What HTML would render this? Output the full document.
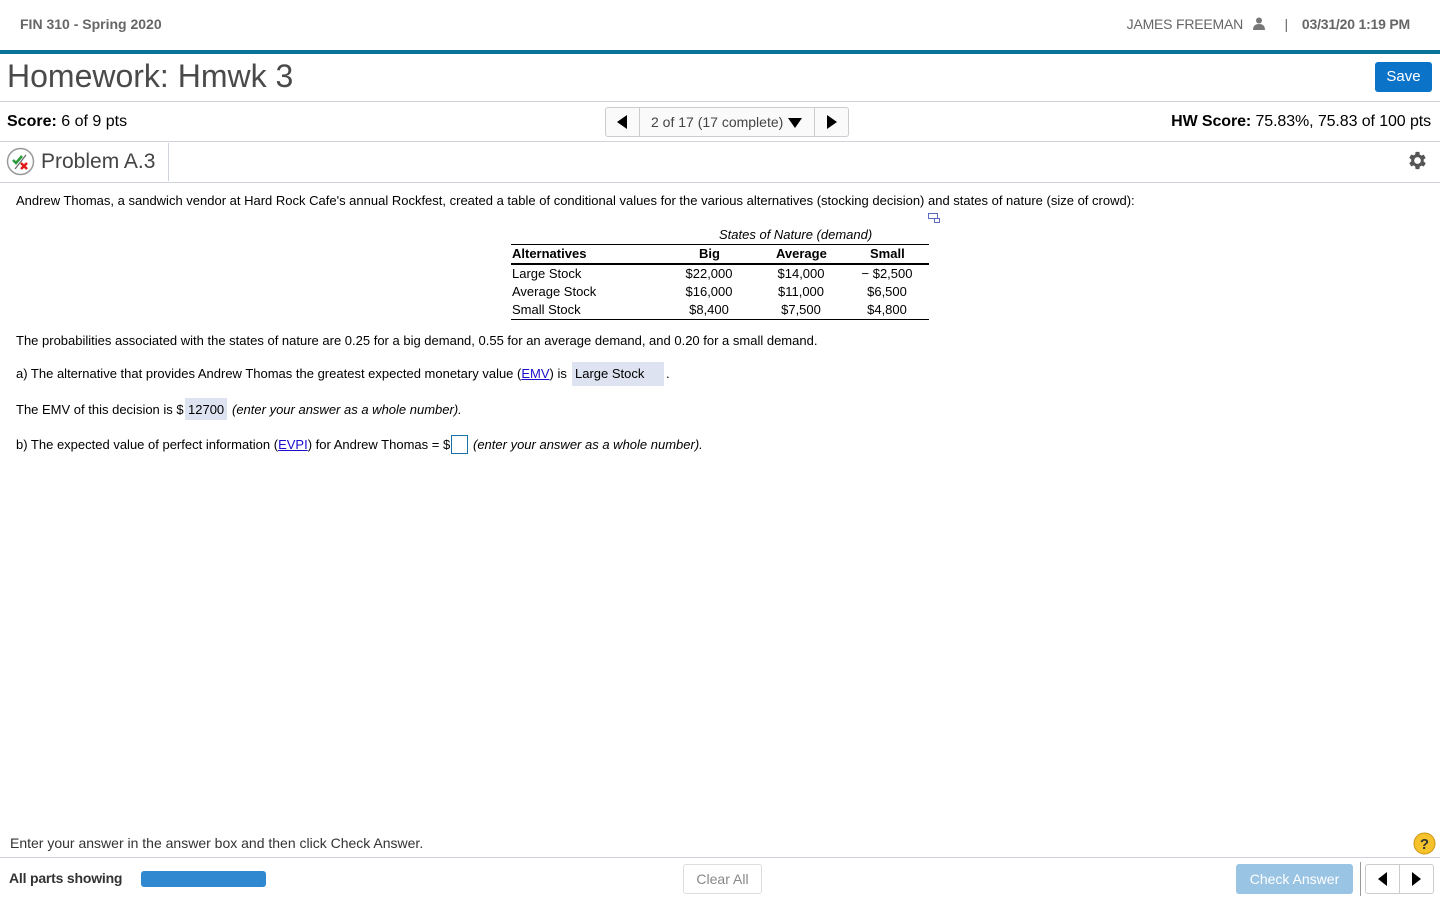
<!DOCTYPE html>
<html><head><style>
*{margin:0;padding:0;box-sizing:border-box}
body{width:1440px;height:900px;position:relative;font-family:"Liberation Sans",Arial,sans-serif;background:#fff;color:#000;overflow:hidden}
.a{position:absolute;white-space:nowrap}
.hl{position:absolute;left:0;width:1440px;height:1px;background:#cfd3dc}
.t{font-size:13px}
a{color:#1a0dcc}
</style></head><body>
<div class="a" style="left:20px;top:16px;font-size:14px;font-weight:bold;color:#666">FIN 310 - Spring 2020</div>
<div class="a" style="right:30px;top:16px;font-size:14px;color:#666;letter-spacing:-0.2px">JAMES FREEMAN
<svg width="12" height="13" viewBox="0 0 12 13" style="margin-left:6px;vertical-align:-1px"><circle cx="6" cy="3.5" r="3" fill="#777"/><path d="M0 13 Q0 7 6 7 Q12 7 12 13Z" fill="#777"/></svg>
<span style="margin-left:16px">|</span><b style="margin-left:14px">03/31/20 1:19 PM</b></div>
<div class="a" style="left:0;top:50px;width:1440px;height:4px;background:#0a7399"></div>
<div class="a" style="left:7px;top:58px;font-size:32px;color:#4a4a4a">Homework: Hmwk 3</div>
<div class="a" style="left:1375px;top:62px;width:57px;height:30px;background:#0b74c8;border-radius:3px;color:#fff;font-size:15px;text-align:center;line-height:30px">Save</div>
<div class="hl" style="top:101px"></div>
<div class="a" style="left:7px;top:113px;font-size:16px"><b>Score:</b> 6 of 9 pts</div>
<div class="a" style="left:605px;top:107px;width:244px;height:30px;border:1px solid #ccc;border-radius:3px;background:#fafafa"></div>
<div class="a" style="left:639px;top:108px;width:1px;height:28px;background:#ccc"></div>
<div class="a" style="left:814px;top:108px;width:1px;height:28px;background:#ccc"></div>
<svg class="a" style="left:617px;top:115px" width="10" height="14"><path d="M10 0V14L0 7Z" fill="#000"/></svg>
<div class="a" style="left:651px;top:114px;font-size:14px;color:#444">2 of 17 (17 complete)</div>
<svg class="a" style="left:788px;top:118px" width="14" height="10"><path d="M0 0H14L7 10Z" fill="#000"/></svg>
<svg class="a" style="left:827px;top:115px" width="10" height="14"><path d="M0 0V14L10 7Z" fill="#000"/></svg>
<div class="a" style="right:9px;top:113px;font-size:16px;letter-spacing:-0.1px"><b>HW Score:</b> 75.83%, 75.83 of 100 pts</div>
<div class="hl" style="top:141px"></div>
<svg class="a" style="left:6px;top:147px" width="29" height="29" viewBox="0 0 29 29"><circle cx="14.5" cy="14.5" r="13" fill="#fff" stroke="#999" stroke-width="1.5"/><path d="M7 13l3 3 6-7" stroke="#2a9a3a" stroke-width="2.5" fill="none"/><path d="M9 22L20 8" stroke="#666" stroke-width="1.2"/><path d="M15 16l6 6M21 16l-6 6" stroke="#e01818" stroke-width="2.5"/></svg>
<div class="a" style="left:41px;top:150px;font-size:21px;color:#444">Problem A.3</div>
<div class="a" style="left:168px;top:143px;width:1px;height:38px;background:#cfd3dc"></div>
<svg class="a" style="left:1406px;top:149px" width="23" height="23" viewBox="0 0 24 24"><path fill="#555" d="M19.4 13a7.5 7.5 0 000-2l2.1-1.6-2-3.5-2.5 1a7.4 7.4 0 00-1.7-1L15 3h-4l-.4 2.7a7.4 7.4 0 00-1.7 1l-2.5-1-2 3.5L6.5 11a7.5 7.5 0 000 2l-2.1 1.6 2 3.5 2.5-1a7.4 7.4 0 001.7 1L11 21h4l.4-2.7a7.4 7.4 0 001.7-1l2.5 1 2-3.5zM13 15.5a3.5 3.5 0 110-7 3.5 3.5 0 010 7z" transform="translate(-1 0)"/></svg>
<div class="hl" style="top:182px"></div>
<div class="a t" style="left:16px;top:193px">Andrew Thomas, a sandwich vendor at Hard Rock Cafe's annual Rockfest, created a table of conditional values for the various alternatives (stocking decision) and states of nature (size of crowd):</div>
<svg class="a" style="left:928px;top:213px" width="12" height="10"><rect x="0.5" y="0.5" width="9" height="5" fill="none" stroke="#5a6bbf"/><rect x="6.5" y="5.5" width="5" height="4" fill="none" stroke="#5a6bbf"/></svg>
<div class="a t" style="left:719px;top:227px;font-style:italic">States of Nature (demand)</div>
<div class="a" style="left:511px;top:244px;width:418px;height:1px;background:#000"></div>
<div class="a" style="left:511px;top:263px;width:418px;height:2px;background:#000"></div>
<div class="a" style="left:511px;top:319px;width:418px;height:1px;background:#000"></div>
<div class="a t" style="left:512px;top:246px;font-weight:bold">Alternatives</div>
<div class="a t" style="left:699px;top:246px;font-weight:bold">Big</div>
<div class="a t" style="left:776px;top:246px;font-weight:bold">Average</div>
<div class="a t" style="left:870px;top:246px;font-weight:bold">Small</div>
<div class="a t" style="left:512px;top:265px;line-height:18px">Large Stock<br>Average Stock<br>Small Stock</div>
<div class="a t" style="left:670px;top:265px;line-height:18px;width:78px;text-align:center">$22,000<br>$16,000<br>$8,400</div>
<div class="a t" style="left:762px;top:265px;line-height:18px;width:78px;text-align:center">$14,000<br>$11,000<br>$7,500</div>
<div class="a t" style="left:848px;top:265px;line-height:18px;width:78px;text-align:center">− $2,500<br>$6,500<br>$4,800</div>
<div class="a t" style="left:16px;top:333px">The probabilities associated with the states of nature are 0.25 for a big demand, 0.55 for an average demand, and 0.20 for a small demand.</div>
<div class="a t" style="left:16px;top:366px">a) The alternative that provides Andrew Thomas the greatest expected monetary value (<a href="#">EMV</a>) is</div>
<div class="a t" style="left:572px;top:362px;width:92px;height:24px;background:#dde3f0;padding:4px 0 0 3px">Large Stock</div>
<div class="a t" style="left:666px;top:366px">.</div>
<div class="a t" style="left:16px;top:402px">The EMV of this decision is $</div>
<div class="a t" style="left:185px;top:398px;width:42px;height:22px;background:#dde3f0;padding:4px 0 0 3px">12700</div>
<div class="a t" style="left:232px;top:402px;font-style:italic">(enter your answer as a whole number).</div>
<div class="a t" style="left:16px;top:437px">b) The expected value of perfect information (<a href="#">EVPI</a>) for Andrew Thomas = $</div>
<div class="a" style="left:451px;top:435px;width:17px;height:19px;border:1px solid #1a6fa8"></div>
<div class="a t" style="left:473px;top:437px;font-style:italic">(enter your answer as a whole number).</div>
<div class="a" style="left:10px;top:835px;font-size:14px;color:#333">Enter your answer in the answer box and then click Check Answer.</div>
<svg class="a" style="left:1413px;top:832px" width="23" height="23"><circle cx="11.5" cy="11.5" r="10.5" fill="#f5c22b" stroke="#c99512"/><text x="11.5" y="17" font-family="Liberation Sans" font-weight="bold" font-size="15" text-anchor="middle" fill="#333">?</text></svg>
<div class="hl" style="top:857px"></div>
<div class="a" style="left:9px;top:870px;font-size:14px;font-weight:bold;color:#333;letter-spacing:-0.2px">All parts showing</div>
<div class="a" style="left:141px;top:871px;width:125px;height:16px;background:#2f88d0;border-radius:3px"></div>
<div class="a" style="left:683px;top:864px;width:79px;height:30px;border:1px solid #ddd;border-radius:3px;color:#888;font-size:14px;text-align:center;line-height:28px">Clear All</div>
<div class="a" style="left:1236px;top:864px;width:117px;height:30px;background:#9ac4e4;border-radius:3px;color:#fff;font-size:14px;text-align:center;line-height:30px">Check Answer</div>
<div class="a" style="left:1360px;top:862px;width:1px;height:34px;background:#999"></div>
<div class="a" style="left:1365px;top:864px;width:69px;height:30px;border:1px solid #ccc;border-radius:3px"></div>
<div class="a" style="left:1399px;top:865px;width:1px;height:28px;background:#ccc"></div>
<svg class="a" style="left:1378px;top:872px" width="9" height="14"><path d="M9 0V14L0 7Z" fill="#000"/></svg>
<svg class="a" style="left:1412px;top:872px" width="9" height="14"><path d="M0 0V14L9 7Z" fill="#000"/></svg>
</body></html>
